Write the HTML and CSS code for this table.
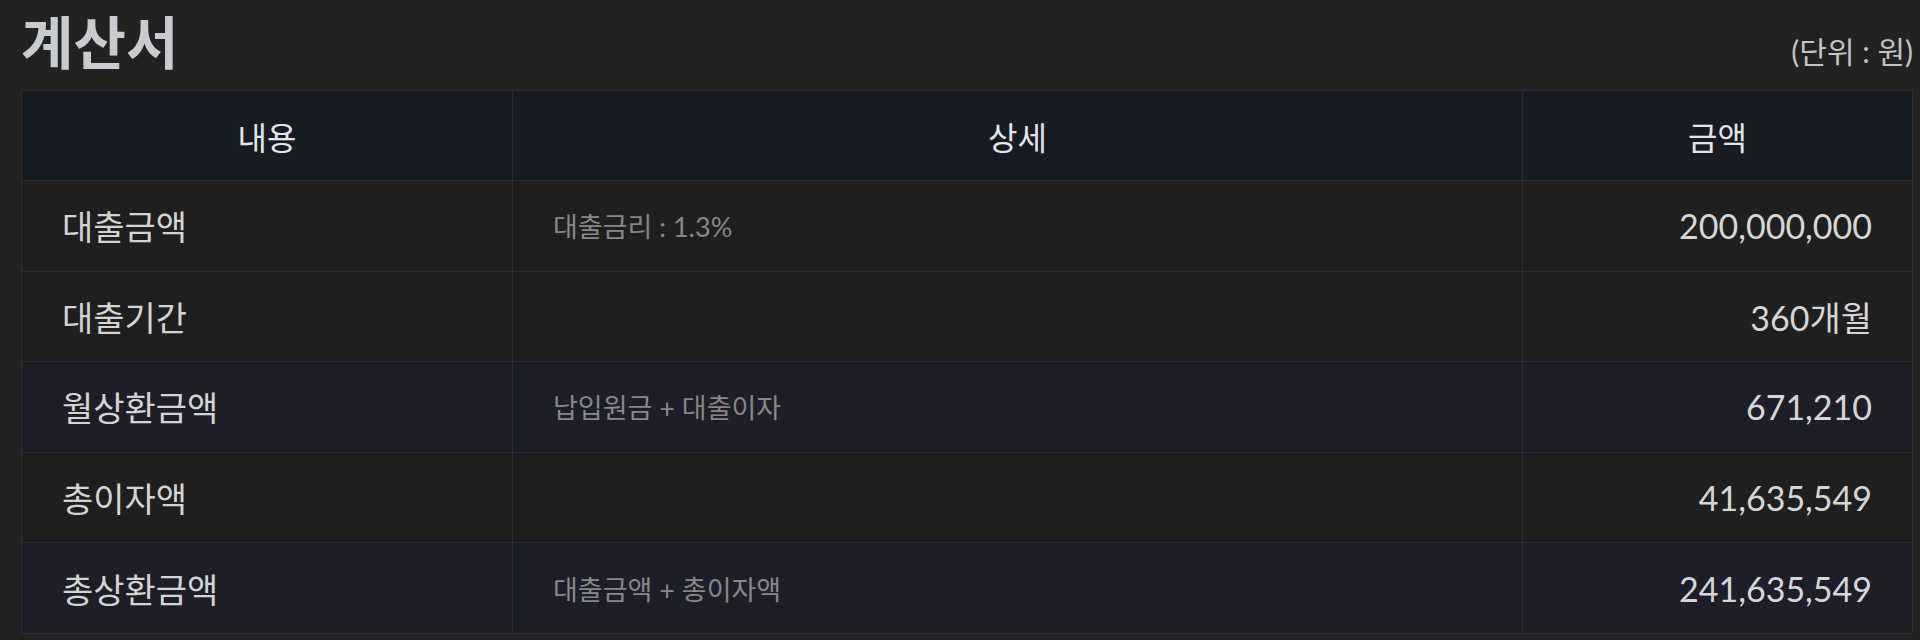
FILE: index.html
```html
<!DOCTYPE html>
<html lang="ko">
<head>
<meta charset="utf-8">
<title>계산서</title>
<link rel="stylesheet" href="styles.css">
</head>
<body>
<div class="page">
  <div class="top">
    <h1 class="title">계산서</h1>
    <span class="unit">(단위 : 원)</span>
  </div>
  <table class="bill">
    <colgroup>
      <col class="c1"><col class="c2"><col class="c3">
    </colgroup>
    <thead>
      <tr><th>내용</th><th>상세</th><th>금액</th></tr>
    </thead>
    <tbody>
      <tr><td class="label">대출금액</td><td class="detail">대출금리 : 1.3%</td><td class="amount">200,000,000</td></tr>
      <tr><td class="label">대출기간</td><td class="detail"></td><td class="amount">360개월</td></tr>
      <tr class="alt"><td class="label">월상환금액</td><td class="detail">납입원금 + 대출이자</td><td class="amount">671,210</td></tr>
      <tr><td class="label">총이자액</td><td class="detail"></td><td class="amount">41,635,549</td></tr>
      <tr class="alt"><td class="label">총상환금액</td><td class="detail">대출금액 + 총이자액</td><td class="amount">241,635,549</td></tr>
    </tbody>
  </table>
</div>
</body>
</html>
```
FILE: styles.css
```css
html, body {
  margin: 0;
  padding: 0;
  background: #222222;
}
body {
  font-family: Lato, "Noto Sans CJK KR", sans-serif;
  color: #d2d2d2;
}
.page {
  padding: 0 7px 0 21px;
}
.top {
  display: flex;
  justify-content: space-between;
  align-items: flex-end;
  height: 90px;
}
.title {
  margin: 0;
  font-size: 57px;
  font-weight: 700;
  line-height: 57px;
  color: #c8ccd1;
  padding-bottom: 19px;
}
.unit {
  font-size: 30px;
  line-height: 34px;
  color: #c4c4c4;
  padding-bottom: 22px;
}
.bill {
  width: 100%;
  border-collapse: collapse;
  table-layout: fixed;
  border: 1px solid #2b2e36;
}
.c1 { width: 491px; }
.c2 { width: 1010px; }
.c3 { width: auto; }
.bill th,
.bill td {
  border: 1px solid #2b2e36;
  padding: 0 40px;
}
.bill th {
  height: 89px;
  background: #171b22;
  color: #e2e6ec;
  font-size: 32px;
  font-weight: 400;
  text-align: center;
}
.bill td {
  height: 89.6px;
  background: #1f1f1f;
}
.bill tr.alt td {
  background: #1d1e27;
}
.label {
  font-size: 34px;
  color: #d4d4d4;
}
.detail {
  font-size: 27px;
  color: #878787;
}
.amount {
  font-size: 34px;
  text-align: right;
  color: #d6d6d6;
}
```
